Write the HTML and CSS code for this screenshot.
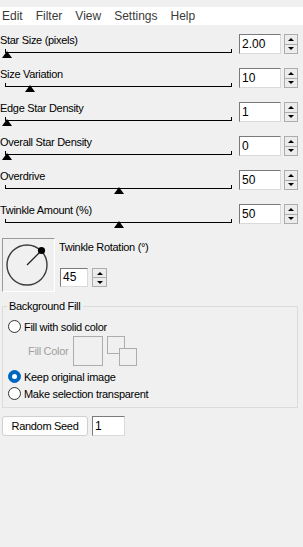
FILE: index.html
```
<!DOCTYPE html>
<html lang="en">
<head>
    <meta charset="UTF-8">
    <title>Star Filter</title>
    <link rel="stylesheet" href="styles.css">
</head>
<body>
    <div class="menubar">
        <span>Edit</span>
        <span>Filter</span>
        <span>View</span>
        <span>Settings</span>
        <span>Help</span>
    </div>

    <div class="sliders">
        <div class="row">
            <div class="slider-col">
                <div class="label">Star Size (pixels)</div>
                <div class="track"><div class="thumb" style="left: 1px"></div></div>
            </div>
            <div class="num">2.00</div>
            <div class="spin"><span class="up"></span><span class="down"></span></div>
        </div>
        <div class="row">
            <div class="slider-col">
                <div class="label">Size Variation</div>
                <div class="track"><div class="thumb" style="left: 24px"></div></div>
            </div>
            <div class="num">10</div>
            <div class="spin"><span class="up"></span><span class="down"></span></div>
        </div>
        <div class="row">
            <div class="slider-col">
                <div class="label">Edge Star Density</div>
                <div class="track"><div class="thumb" style="left: 1px"></div></div>
            </div>
            <div class="num">1</div>
            <div class="spin"><span class="up"></span><span class="down"></span></div>
        </div>
        <div class="row">
            <div class="slider-col">
                <div class="label">Overall Star Density</div>
                <div class="track"><div class="thumb" style="left: 1px"></div></div>
            </div>
            <div class="num">0</div>
            <div class="spin"><span class="up"></span><span class="down"></span></div>
        </div>
        <div class="row">
            <div class="slider-col">
                <div class="label">Overdrive</div>
                <div class="track"><div class="thumb" style="left: 113px"></div></div>
            </div>
            <div class="num">50</div>
            <div class="spin"><span class="up"></span><span class="down"></span></div>
        </div>
        <div class="row">
            <div class="slider-col">
                <div class="label">Twinkle Amount (%)</div>
                <div class="track"><div class="thumb" style="left: 113px"></div></div>
            </div>
            <div class="num">50</div>
            <div class="spin"><span class="up"></span><span class="down"></span></div>
        </div>
    </div>

    <div class="rotation">
        <div class="dial">
            <svg width="51" height="52" viewBox="0 0 51 52">
                <circle cx="24" cy="26" r="20" fill="none" stroke="#3c3c3c" stroke-width="1.4"/>
                <line x1="24" y1="26" x2="38" y2="12" stroke="#222" stroke-width="1.3"/>
                <circle cx="38.5" cy="11.5" r="3.6" fill="#000"/>
            </svg>
        </div>
        <div class="rotation-right">
            <div class="label">Twinkle Rotation (°)</div>
            <div class="rot-input">
                <div class="num small">45</div>
                <div class="spin small"><span class="up"></span><span class="down"></span></div>
            </div>
        </div>
    </div>

    <fieldset class="bg-fill">
        <legend>Background Fill</legend>
        <div class="radio-row"><span class="radio"></span>Fill with solid color</div>
        <div class="color-row">
            <span class="disabled">Fill Color</span>
            <span class="swatch"></span>
            <span class="swap">
                <span class="sq sq1"></span>
                <span class="sq sq2"></span>
            </span>
        </div>
        <div class="radio-row"><span class="radio checked"></span>Keep original image</div>
        <div class="radio-row"><span class="radio"></span>Make selection transparent</div>
    </fieldset>

    <div class="seed-row">
        <button class="seed-btn">Random Seed</button>
        <div class="num seed">1</div>
    </div>
</body>
</html>
```

FILE: styles.css
```
body {
    margin: 0;
    background-color: #f0f0f0;
    font-family: "Liberation Sans", Arial, sans-serif;
    font-size: 11px;
    letter-spacing: -0.3px;
    color: #000;
}
.menubar {
    margin-top: 7px;
    height: 18px;
    background-color: #fff;
    display: flex;
    gap: 13px;
    padding-left: 2px;
    font-size: 12px;
    letter-spacing: 0;
    line-height: 18px;
    color: #3a3a3a;
}
.sliders {
    margin-top: 9px;
}
.row {
    display: flex;
    height: 34px;
}
.slider-col {
    width: 239px;
}
.label {
    line-height: 13px;
    height: 15px;
}
.track {
    position: relative;
    margin-left: 5px;
    width: 225px;
    height: 3px;
    border: 1px solid #000;
    border-top: none;
}
.thumb {
    position: absolute;
    top: 2px;
    margin-left: -5px;
    width: 0;
    height: 0;
    border-left: 5.5px solid transparent;
    border-right: 5.5px solid transparent;
    border-bottom: 7px solid #000;
}
.num {
    box-sizing: border-box;
    width: 42px;
    height: 20px;
    background-color: #fff;
    border: 1px solid;
    border-color: #7a7a7a #dadada #dadada #7a7a7a;
    padding-left: 2px;
    font-size: 12px;
    letter-spacing: 0;
    line-height: 18px;
}
.spin {
    margin-left: 3px;
    width: 14px;
    height: 20px;
    display: flex;
    flex-direction: column;
}
.spin span {
    box-sizing: border-box;
    flex: 1;
    border: 1px solid #adadad;
    background-color: #ececec;
    display: flex;
    align-items: center;
    justify-content: center;
}
.spin .down {
    margin-top: -1px;
}
.spin .up::after {
    content: "";
    border-left: 3px solid transparent;
    border-right: 3px solid transparent;
    border-bottom: 3px solid #000;
}
.spin .down::after {
    content: "";
    border-left: 3px solid transparent;
    border-right: 3px solid transparent;
    border-top: 3px solid #000;
}
.rotation {
    display: flex;
}
.dial {
    margin-left: 2px;
    width: 51px;
    height: 52px;
    border: 1px solid;
    border-color: #9a9a9a #fff #fff #9a9a9a;
}
.rotation-right {
    margin-left: 4px;
    padding-top: 3px;
}
.rot-input {
    display: flex;
    margin-top: 12px;
    margin-left: 1px;
}
.num.small {
    width: 28px;
    height: 19px;
    line-height: 17px;
}
.spin.small {
    margin-left: 4px;
    width: 15px;
    height: 19px;
}
.bg-fill {
    margin: 8px 5px 0 2px;
    padding: 5px 0 5px 5px;
    border: 1px solid #dcdcdc;
}
.bg-fill legend {
    padding: 0 3px 0 2px;
    margin-left: -1px;
    line-height: 13px;
}
.radio-row {
    display: flex;
    align-items: center;
    height: 17px;
    gap: 3px;
}
.radio {
    box-sizing: border-box;
    width: 13px;
    height: 13px;
    border: 1px solid #333;
    border-radius: 50%;
    background-color: #fff;
}
.radio.checked {
    border-color: #0067c0;
    background-color: #0067c0;
    display: flex;
    align-items: center;
    justify-content: center;
}
.radio.checked::after {
    content: "";
    width: 5px;
    height: 5px;
    border-radius: 50%;
    background-color: #fff;
}
.color-row {
    display: flex;
    align-items: center;
    margin: 1px 0 2px 20px;
    height: 30px;
}
.disabled {
    color: #a0a0a0;
    width: 45px;
}
.swatch {
    box-sizing: border-box;
    width: 30px;
    height: 30px;
    border: 1px solid #adadad;
}
.swap {
    position: relative;
    margin-left: 4px;
    width: 30px;
    height: 30px;
}
.sq {
    position: absolute;
    box-sizing: border-box;
    width: 18px;
    height: 18px;
    border: 1px solid #adadad;
    background-color: #f0f0f0;
}
.sq1 {
    left: 0;
    top: 0;
}
.sq2 {
    left: 12px;
    top: 12px;
}
.seed-row {
    display: flex;
    margin-top: 8px;
    margin-left: 2px;
    gap: 4px;
}
.seed-btn {
    box-sizing: border-box;
    width: 86px;
    height: 20px;
    padding: 0;
    background-color: #fdfdfd;
    border: 1px solid #d0d0d0;
    border-radius: 3px;
    font-family: "Liberation Sans", Arial, sans-serif;
    font-size: 11px;
    letter-spacing: -0.3px;
    color: #000;
}
.num.seed {
    width: 33px;
    height: 20px;
}
```
